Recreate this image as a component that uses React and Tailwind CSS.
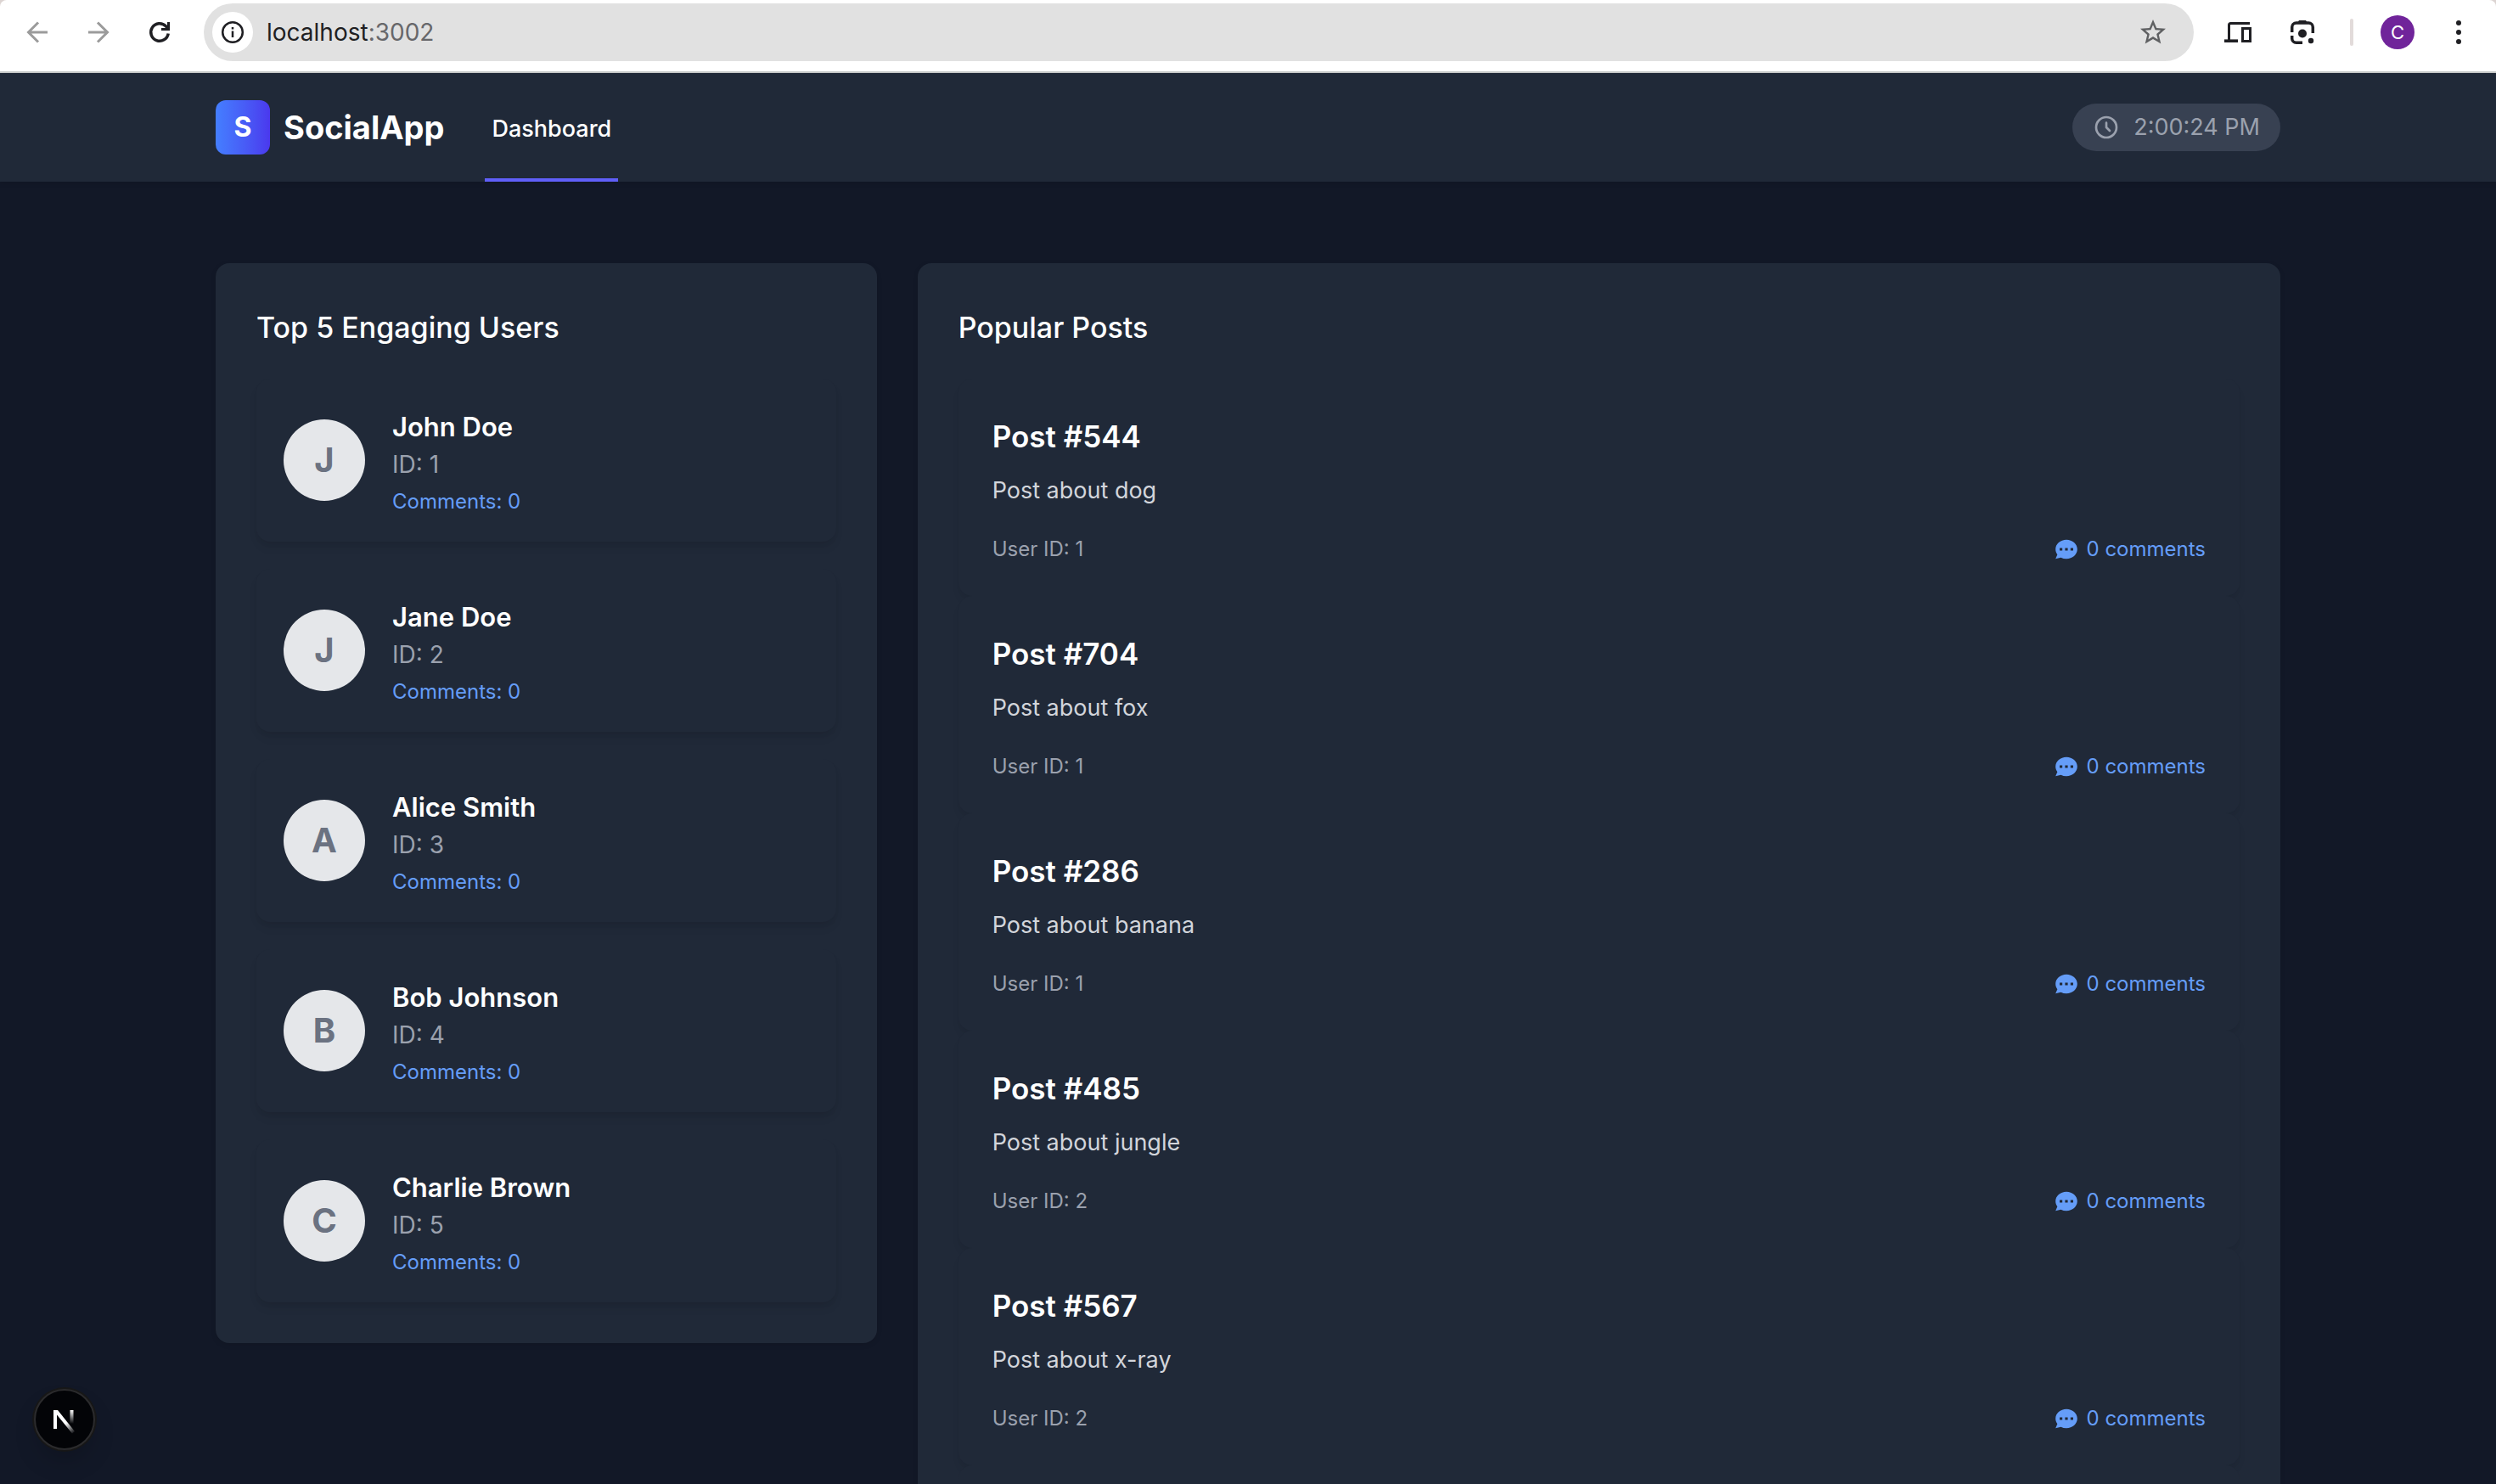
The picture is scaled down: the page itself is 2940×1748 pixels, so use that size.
const users = [
  { id: 1, name: "John Doe", comments: 0 },
  { id: 2, name: "Jane Doe", comments: 0 },
  { id: 3, name: "Alice Smith", comments: 0 },
  { id: 4, name: "Bob Johnson", comments: 0 },
  { id: 5, name: "Charlie Brown", comments: 0 },
];

const posts = [
  { id: 544, text: "Post about dog", user: 1, comments: 0 },
  { id: 704, text: "Post about fox", user: 1, comments: 0 },
  { id: 286, text: "Post about banana", user: 1, comments: 0 },
  { id: 485, text: "Post about jungle", user: 2, comments: 0 },
  { id: 567, text: "Post about x-ray", user: 2, comments: 0 },
];

function LineIcon({ children, width = 3.5 }) {
  return (
    <svg viewBox="0 0 40 40" fill="none" stroke="currentColor" strokeWidth={width} className="size-10" aria-hidden="true">
      {children}
    </svg>
  );
}

function BrowserBar() {
  return (
    <div className="shrink-0 bg-[#dcd4d2]">
      <div className="flex h-[86px] items-start rounded-t-lg border-b-2 border-[#c9cccb] bg-white pt-1 text-[#1f1f23]">
        <div className="flex h-[68px] w-60 items-center">
          <button aria-label="Back" className="ml-6 text-[#9b9b9b]">
            <LineIcon width={3}>
              <path d="M32 20H10M21 8.500L9.500 20 21 31.500" />
            </LineIcon>
          </button>
          <button aria-label="Forward" className="ml-8 text-[#9b9b9b]">
            <LineIcon width={3}>
              <path d="M8 20h22M19 8.500L30.500 20 19 31.500" />
            </LineIcon>
          </button>
          <button aria-label="Reload" className="ml-8">
            <LineIcon>
              <path d="M30.200 21.500A10.300 10.300 0 1 1 27.300 12.700L29 14.500" />
              <path d="M32 8v10H22v-3h4.500L29 12.500V8z" fill="currentColor" stroke="none" />
            </LineIcon>
          </button>
        </div>
        <div className="flex h-[68px] flex-1 items-center rounded-full bg-[#e1e1e1] pr-7 pl-2.5">
          <button aria-label="View site information" className="flex size-12 items-center justify-center rounded-full bg-white">
            <svg viewBox="0 0 28 28" fill="none" stroke="currentColor" strokeWidth="2.500" className="size-7" aria-hidden="true">
              <circle cx="14" cy="14" r="11.800" />
              <path d="M14 12.500v7.500M14 8v2.500" />
            </svg>
          </button>
          <a href="#" className="ml-4 text-[28px] leading-9">
            localhost<span className="text-[#67676a]">:3002</span>
          </a>
          <button aria-label="Bookmark this tab" className="ml-auto text-[#5f6062]">
            <svg viewBox="0 0 24 24" fill="currentColor" className="size-9 mr-0.5" aria-hidden="true">
              <path d="M22 9.240l-7.190-.62L12 2 9.190 8.630 2 9.240l5.460 4.730L5.820 21 12 17.270 18.180 21l-1.630-7.030L22 9.240zM12 15.400l-3.760 2.270 1-4.280-3.320-2.880 4.380-.38L12 6.100l1.710 4.040 4.380.38-3.320 2.880 1 4.280L12 15.400z" />
            </svg>
          </button>
        </div>
        <div className="flex h-[68px] w-[356px] items-center pl-8">
          <button aria-label="Devices">
            <LineIcon width={3}>
              <path d="M34 9.500H11.500a2 2 0 0 0-2 2V29" />
              <path d="M4 30.200h16" strokeWidth="3.600" />
              <rect x="25.500" y="15.500" width="9" height="15" />
            </LineIcon>
          </button>
          <button aria-label="Search with Lens" className="ml-9">
            <LineIcon>
              <path d="M7.700 20v-6a5 5 0 0 1 5-5h14.600a5 5 0 0 1 5 5v7M7.700 24v3.300a5 5 0 0 0 5 5H20" />
              <path d="M14 9l2-3h8l2 3z" fill="currentColor" stroke="none" />
              <circle cx="20" cy="21.500" r="5" fill="currentColor" stroke="none" />
              <circle cx="30" cy="30" r="3.200" fill="currentColor" stroke="none" />
            </LineIcon>
          </button>
          <span className="ml-9 h-8 w-1 rounded-full bg-[#e2dbda]" />
          <button aria-label="Profile" className="ml-8 flex size-10 items-center justify-center rounded-full bg-[#70249a] text-[22px] text-white">
            C
          </button>
          <button aria-label="Menu" className="ml-8">
            <svg viewBox="0 0 40 40" fill="currentColor" className="size-10" aria-hidden="true">
              <circle cx="20" cy="9" r="3" />
              <circle cx="20" cy="20" r="3" />
              <circle cx="20" cy="31" r="3" />
            </svg>
          </button>
        </div>
      </div>
    </div>
  );
}

function Header() {
  return (
    <header className="relative shrink-0 bg-[#202938] shadow-[0_2px_6px_rgba(0,0,0,0.1)]">
      <div className="mx-auto flex h-32 max-w-[2560px] items-stretch justify-between px-16">
        <div className="flex">
          <a href="#" className="flex items-center gap-4 text-[38px] font-bold">
            <span className="flex size-16 items-center justify-center rounded-xl bg-linear-to-r from-[#447eff] to-[#4a38ee] text-[32px]">
              S
            </span>
            SocialApp
          </a>
          <nav className="ml-12 flex">
            <a href="#" className="flex items-center border-b-4 border-[#605ff8] px-2 pt-2 text-[27px] font-medium">
              Dashboard
            </a>
          </nav>
        </div>
        <div className="flex items-center">
          <div className="flex h-14 items-center gap-4 rounded-full bg-[#384152] px-6 text-[27px] text-[#9ba1ae]">
            <svg viewBox="0 0 24 24" fill="none" stroke="currentColor" strokeWidth="2" strokeLinecap="round" strokeLinejoin="round" className="size-8" aria-hidden="true">
              <path d="M12 8v4l3 3m6-3a9 9 0 11-18 0 9 9 0 0118 0z" />
            </svg>
            <time>2:00:24 PM</time>
          </div>
        </div>
      </div>
    </header>
  );
}

function UserCard({ user }) {
  return (
    <li className="flex items-center gap-8 rounded-2xl bg-[#202938] p-8 shadow-[0_8px_12px_-2px_rgba(0,0,0,0.08),0_4px_8px_-4px_rgba(0,0,0,0.08)]">
      <span className="flex size-24 items-center justify-center rounded-full bg-[#e5e7ea] text-[40px] font-bold text-[#6b7281]">
        {user.name[0]}
      </span>
      <div>
        <h3 className="text-[31px] leading-[50px] font-semibold">{user.name}</h3>
        <p className="text-[28px] leading-[38px] text-[#9ba1ae]">ID: {user.id}</p>
        <p className="mt-2.5 text-2xl leading-[30px] text-[#659df8]">Comments: {user.comments}</p>
      </div>
    </li>
  );
}

function PostCard({ post }) {
  return (
    <li className="rounded-2xl bg-[#202938] p-10 shadow-[0_8px_12px_-2px_rgba(0,0,0,0.06),0_4px_8px_-4px_rgba(0,0,0,0.06)]">
      <h3 className="text-[35px] leading-14 font-semibold">Post #{post.id}</h3>
      <p className="mt-4 text-[27px] leading-10 text-[#d2d5db]">{post.text}</p>
      <div className="mt-[34px] flex h-[30px] items-center justify-between text-2xl leading-[30px]">
        <span className="text-[#9ba1ae]">User ID: {post.user}</span>
        <span className="flex items-center gap-2 text-[#659df8]">
          <svg viewBox="0 0 20 20" fill="currentColor" className="size-8" aria-hidden="true">
            <path
              fillRule="evenodd"
              clipRule="evenodd"
              d="M18 10c0 3.866-3.582 7-8 7a8.841 8.841 0 01-4.083-.98L2 17l1.338-3.123C2.493 12.767 2 11.434 2 10c0-3.866 3.582-7 8-7s8 3.134 8 7zM7 9H5v2h2V9zm8 0h-2v2h2V9zM9 9h2v2H9V9z"
            />
          </svg>
          {post.comments} comments
        </span>
      </div>
    </li>
  );
}

function NextBadge() {
  return (
    <button
      aria-label="Open Next.js Dev Tools"
      className="fixed bottom-10 left-10 flex size-[72px] items-center justify-center rounded-full border-2 border-[#2b2b2d] bg-[#030407] shadow-[0_0_0_2px_#171717,0_16px_32px_-8px_rgba(0,0,0,0.24)]"
    >
      <svg viewBox="0 0 72 72" fill="none" className="size-[72px] shrink-0" aria-hidden="true">
        <defs>
          <linearGradient id="stem" x1="0" y1="25" x2="0" y2="41" gradientUnits="userSpaceOnUse">
            <stop stopColor="#fff" />
            <stop offset="1" stopColor="#fff" stopOpacity="0" />
          </linearGradient>
          <linearGradient id="slash" x1="38" y1="40" x2="48" y2="52" gradientUnits="userSpaceOnUse">
            <stop stopColor="#fff" />
            <stop offset="1" stopColor="#fff" stopOpacity="0" />
          </linearGradient>
        </defs>
        <path d="M25 47V25" stroke="#fff" strokeWidth="4" />
        <path d="M23 25h5l20 25-3 2.500L25 28z" fill="url(#slash)" />
        <path d="M44.500 25v16" stroke="url(#stem)" strokeWidth="4" />
      </svg>
    </button>
  );
}

export default function App() {
  return (
    <div className="flex h-screen flex-col overflow-hidden bg-[#121827] font-['Inter',sans-serif] text-white">
      <BrowserBar />
      <Header />
      <main className="mx-auto grid w-full max-w-[2560px] grid-cols-3 items-start gap-12 px-16 py-24">
        <section className="rounded-2xl bg-[#202938] p-12 shadow-[0_2px_6px_rgba(0,0,0,0.1)]">
          <h2 className="text-[34px] leading-14 font-medium">Top 5 Engaging Users</h2>
          <ul className="mt-8 space-y-8">
            {users.map((user) => (
              <UserCard key={user.id} user={user} />
            ))}
          </ul>
        </section>
        <section className="col-span-2 rounded-2xl bg-[#202938] p-12 shadow-[0_2px_6px_rgba(0,0,0,0.1)]">
          <h2 className="text-[34px] leading-14 font-medium">Popular Posts</h2>
          <ul className="mt-8">
            {posts.map((post) => (
              <PostCard key={post.id} post={post} />
            ))}
            <li aria-hidden="true" className="h-64 rounded-2xl bg-[#202938]" />
          </ul>
        </section>
      </main>
      <NextBadge />
    </div>
  );
}
